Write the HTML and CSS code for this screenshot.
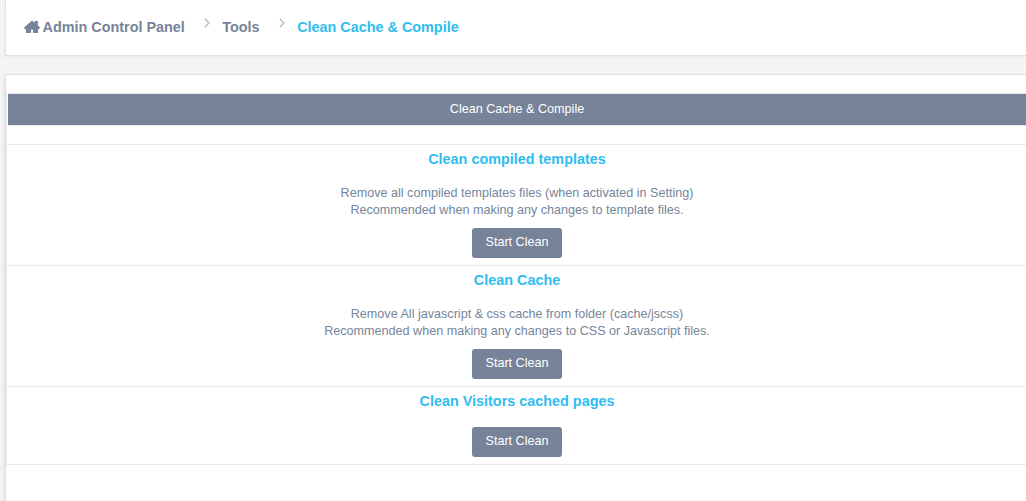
FILE: index.html
```html
<!DOCTYPE html>
<html lang="en">
<head>
  <meta charset="UTF-8">
  <meta name="viewport" content="width=device-width, initial-scale=1.0">
  <title>Clean Cache &amp; Compile</title>
  <link rel="stylesheet" href="styles.css">
</head>
<body>
  <nav class="breadcrumb">
    <a class="crumb" href="#">
      <svg class="icon-home" viewBox="0 0 16 14" width="16" height="14">
        <path fill="currentColor" d="M8 .4 10.6 2.7V1h3.3v4.6L16 7.5l-.9 1.7H14V13H9.1V9.8H6.9V13H2V9.2H.9L0 7.5z"/>
      </svg>
      <span>Admin Control Panel</span>
    </a>
    <svg class="icon-arrow" viewBox="0 0 6 10" width="6" height="10"><path d="M.8.8 4.9 5 .8 9.2"/></svg>
    <a class="crumb" href="#">Tools</a>
    <svg class="icon-arrow" viewBox="0 0 6 10" width="6" height="10"><path d="M.8.8 4.9 5 .8 9.2"/></svg>
    <a class="crumb crumb--active" href="#">Clean Cache &amp; Compile</a>
  </nav>

  <main class="panel">
    <div class="panel-inner">
      <h1 class="panel-title">Clean Cache &amp; Compile</h1>
      <section class="row">
        <h2>Clean compiled templates</h2>
        <p>Remove all compiled templates files (when activated in Setting)<br>Recommended when making any changes to template files.</p>
        <button class="btn" type="button">Start Clean</button>
      </section>
      <section class="row">
        <h2>Clean Cache</h2>
        <p>Remove All javascript &amp; css cache from folder (cache/jscss)<br>Recommended when making any changes to CSS or Javascript files.</p>
        <button class="btn" type="button">Start Clean</button>
      </section>
      <section class="row row--short">
        <h2>Clean Visitors cached pages</h2>
        <button class="btn" type="button">Start Clean</button>
      </section>
    </div>
  </main>
</body>
</html>
```
FILE: styles.css
```css
:root {
  --slate: #778399;
  --blue: #2fbdf0;
  --line: #e9eaeb;
}
* {
  box-sizing: border-box;
  margin: 0;
  padding: 0;
}
body {
  height: 100vh;
  overflow: hidden;
  padding-left: 5px;
  display: flex;
  flex-direction: column;
  background: #f5f5f5;
  color: #75859a;
  font-family: "Liberation Sans", Arial, sans-serif;
  font-size: 12.6px;
  line-height: 17px;
}
.breadcrumb {
  display: flex;
  align-items: center;
  flex: none;
  height: 56px;
  padding-left: 18px;
  background: #fff;
  border-left: 1px solid #e0e1e2;
  border-bottom: 1px solid #dfe0e1;
  box-shadow: 0 1px 4px rgba(0, 0, 0, 0.06);
}
.crumb {
  display: flex;
  align-items: center;
  gap: 2.5px;
  color: var(--slate);
  font-size: 14.4px;
  font-weight: bold;
  text-decoration: none;
}
.crumb--active {
  color: var(--blue);
}
.icon-home {
  margin-bottom: 2px;
}
.icon-arrow {
  margin: 0 12px 10px 19.5px;
  fill: none;
  stroke: #bdbec2;
  stroke-width: 1.5;
}
.panel {
  flex: 1;
  margin-top: 18px;
  padding-top: 18px;
  background: #fff;
  border-left: 1px solid #dedfe0;
  border-top: 1px solid #dfe0e1;
  box-shadow: 0 2px 5px rgba(0, 0, 0, 0.12);
}
.panel-inner {
  border-left: 1px solid var(--line);
  text-align: center;
}
.panel-title {
  height: 33px;
  margin: 0 0 18px 1px;
  border-top: 1px solid #e6e9ee;
  border-bottom: 1px solid #e6e9ee;
  background: var(--slate);
  background-clip: padding-box;
  color: #fff;
  font-size: 12.6px;
  font-weight: normal;
  line-height: 30px;
}
.row {
  height: 121px;
  padding: 5px 0 0 1px;
  border-top: 1px solid var(--line);
}
.row--short {
  height: 79px;
  border-bottom: 1px solid var(--line);
}
.row h2 {
  margin-bottom: 17px;
  color: var(--blue);
  font-size: 14.4px;
  line-height: 18px;
}
.row p {
  margin-bottom: 9px;
}
.btn {
  width: 90px;
  height: 30px;
  padding: 0 0 2px;
  border: none;
  border-radius: 3px;
  background: var(--slate);
  color: #fff;
  font: inherit;
  cursor: pointer;
}
```
